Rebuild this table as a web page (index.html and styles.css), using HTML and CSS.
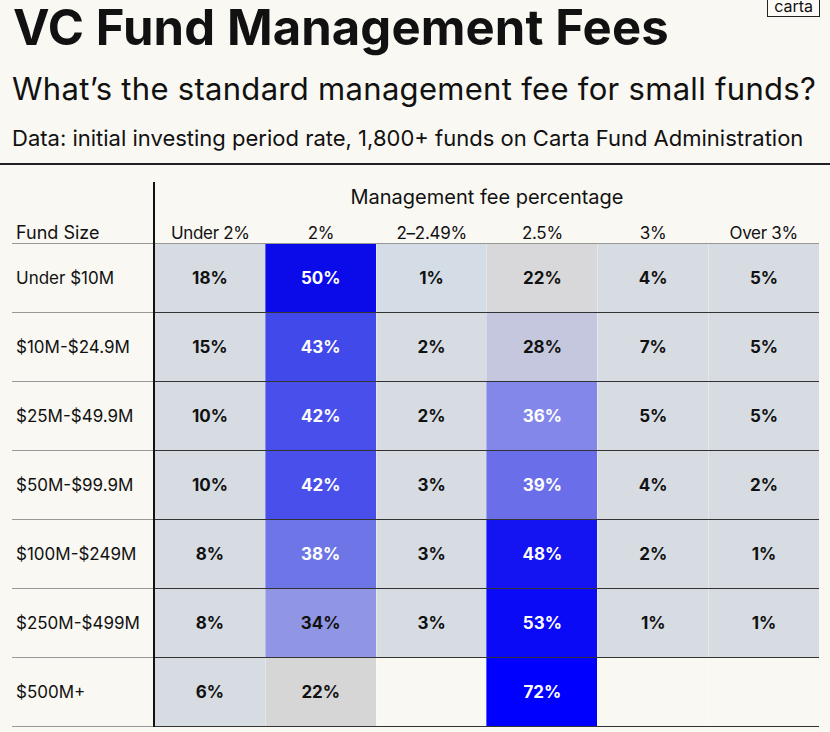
FILE: index.html
```html
<!DOCTYPE html>
<html lang="en">
<head>
<meta charset="utf-8">
<title>VC Fund Management Fees</title>
<link rel="stylesheet" href="styles.css">
</head>
<body>
<div class="page">
  <header class="head">
    <h1 class="title">VC Fund Management Fees</h1>
    <p class="subtitle">What’s the standard management fee for small funds?</p>
    <p class="source">Data: initial investing period rate, 1,800+ funds on Carta Fund Administration</p>
    <div class="logo">carta</div>
  </header>
  <div class="rule"></div>
  <section class="chart">
    <div class="labels">
      <div class="spacer"></div>
      <div class="label-head">Fund Size</div>
      <div class="label">Under $10M</div>
      <div class="label">$10M-$24.9M</div>
      <div class="label">$25M-$49.9M</div>
      <div class="label">$50M-$99.9M</div>
      <div class="label">$100M-$249M</div>
      <div class="label">$250M-$499M</div>
      <div class="label">$500M+</div>
    </div>
    <div class="data">
      <div class="fee-title">Management fee percentage</div>
      <div class="col-heads">
        <div class="col-head">Under 2%</div>
        <div class="col-head">2%</div>
        <div class="col-head">2–2.49%</div>
        <div class="col-head">2.5%</div>
        <div class="col-head">3%</div>
        <div class="col-head">Over 3%</div>
      </div>
      <div class="row">
        <div class="cell c-light">18%</div>
        <div class="cell c-50 inv">50%</div>
        <div class="cell c-light2">1%</div>
        <div class="cell c-gray">22%</div>
        <div class="cell c-light">4%</div>
        <div class="cell c-light">5%</div>
      </div>
      <div class="row">
        <div class="cell c-light">15%</div>
        <div class="cell c-43 inv">43%</div>
        <div class="cell c-light">2%</div>
        <div class="cell c-28">28%</div>
        <div class="cell c-light">7%</div>
        <div class="cell c-light">5%</div>
      </div>
      <div class="row">
        <div class="cell c-light">10%</div>
        <div class="cell c-42 inv">42%</div>
        <div class="cell c-light">2%</div>
        <div class="cell c-36 inv">36%</div>
        <div class="cell c-light">5%</div>
        <div class="cell c-light">5%</div>
      </div>
      <div class="row">
        <div class="cell c-light">10%</div>
        <div class="cell c-42 inv">42%</div>
        <div class="cell c-light">3%</div>
        <div class="cell c-39 inv">39%</div>
        <div class="cell c-light">4%</div>
        <div class="cell c-light">2%</div>
      </div>
      <div class="row">
        <div class="cell c-light">8%</div>
        <div class="cell c-38 inv">38%</div>
        <div class="cell c-light">3%</div>
        <div class="cell c-48 inv">48%</div>
        <div class="cell c-light">2%</div>
        <div class="cell c-light">1%</div>
      </div>
      <div class="row">
        <div class="cell c-light">8%</div>
        <div class="cell c-34">34%</div>
        <div class="cell c-light">3%</div>
        <div class="cell c-53 inv">53%</div>
        <div class="cell c-light">1%</div>
        <div class="cell c-light">1%</div>
      </div>
      <div class="row">
        <div class="cell c-light">6%</div>
        <div class="cell c-gray2">22%</div>
        <div class="cell c-empty"></div>
        <div class="cell c-72 inv">72%</div>
        <div class="cell c-empty"></div>
        <div class="cell c-empty"></div>
      </div>
    </div>
  </section>
</div>
</body>
</html>
```
FILE: styles.css
```css
* { box-sizing: border-box; }
html, body { margin: 0; padding: 0; }
body {
  background: #faf8f3;
  color: #111;
  font-family: Inter, "Noto Sans", "Liberation Sans", sans-serif;
  width: 830px;
  height: 732px;
  overflow: hidden;
}
.page { width: 830px; }
.head {
  position: relative;
  padding: 0 12px;
}
.title {
  margin: 0;
  font-size: 49px;
  line-height: 56px;
  font-weight: 700;
  letter-spacing: 0.1px;
  padding-left: 1px;
}
.subtitle {
  margin: 13px 0 0;
  font-size: 31px;
  line-height: 40px;
  font-weight: 400;
  letter-spacing: 0.3px;
}
.source {
  margin: 14px 0 0;
  font-size: 22px;
  line-height: 30px;
  font-weight: 400;
  letter-spacing: 0;
}
.logo {
  position: absolute;
  top: -3px;
  right: 10px;
  border: 1.5px solid #222;
  padding: 0 6px 1px;
  font-size: 16px;
  line-height: 17px;
  background: #fcfbf8;
}
.rule {
  margin-top: 10px;
  height: 2px;
  background: #222;
}
.chart {
  display: flex;
  margin: 17px 0 0 12px;
  width: 807px;
}
.labels {
  width: 141px;
  flex: none;
}
.spacer { height: 30px; }
.label-head {
  height: 32px;
  border-bottom: 1px solid #999;
  display: flex;
  align-items: flex-end;
  font-size: 18px;
  line-height: 20px;
  padding-left: 4px;
}
.label {
  height: 69px;
  border-bottom: 1px solid #999;
  display: flex;
  align-items: center;
  padding-left: 4px;
  font-size: 17px;
}
.data {
  flex: 1;
  border-left: 2px solid #111;
}
.fee-title {
  height: 30px;
  text-align: center;
  font-size: 20px;
  line-height: 30px;
}
.col-heads {
  height: 32px;
  display: flex;
  border-bottom: 1px solid #999;
}
.col-head {
  flex: 1;
  display: flex;
  align-items: flex-end;
  justify-content: center;
  font-size: 17px;
  line-height: 20px;
  letter-spacing: -0.3px;
}
.row {
  height: 69px;
  display: flex;
  border-bottom: 1px solid #333;
}
.cell {
  flex: 1;
  display: flex;
  align-items: center;
  justify-content: center;
  font-size: 17px;
  font-weight: 700;
  color: #111;
}
.cell + .cell { border-left: 1px solid rgba(255, 255, 255, 0.35); }
.inv { color: #fff; }
.c-light { background: #d6dce2; }
.c-light2 { background: #d4dde5; }
.c-gray { background: #d8d8da; }
.c-gray2 { background: #d6d6d6; }
.c-empty { background: transparent; }
.c-28 { background: #c4c7dd; }
.c-34 { background: #9196e4; }
.c-36 { background: #8287e9; }
.c-38 { background: #6e75e6; }
.c-39 { background: #6a6fe9; }
.c-42 { background: #484feb; }
.c-43 { background: #4249ea; }
.c-48 { background: #1414f2; }
.c-50 { background: #0b0bea; }
.c-53 { background: #0a0af7; }
.c-72 { background: #0000ff; }
```
